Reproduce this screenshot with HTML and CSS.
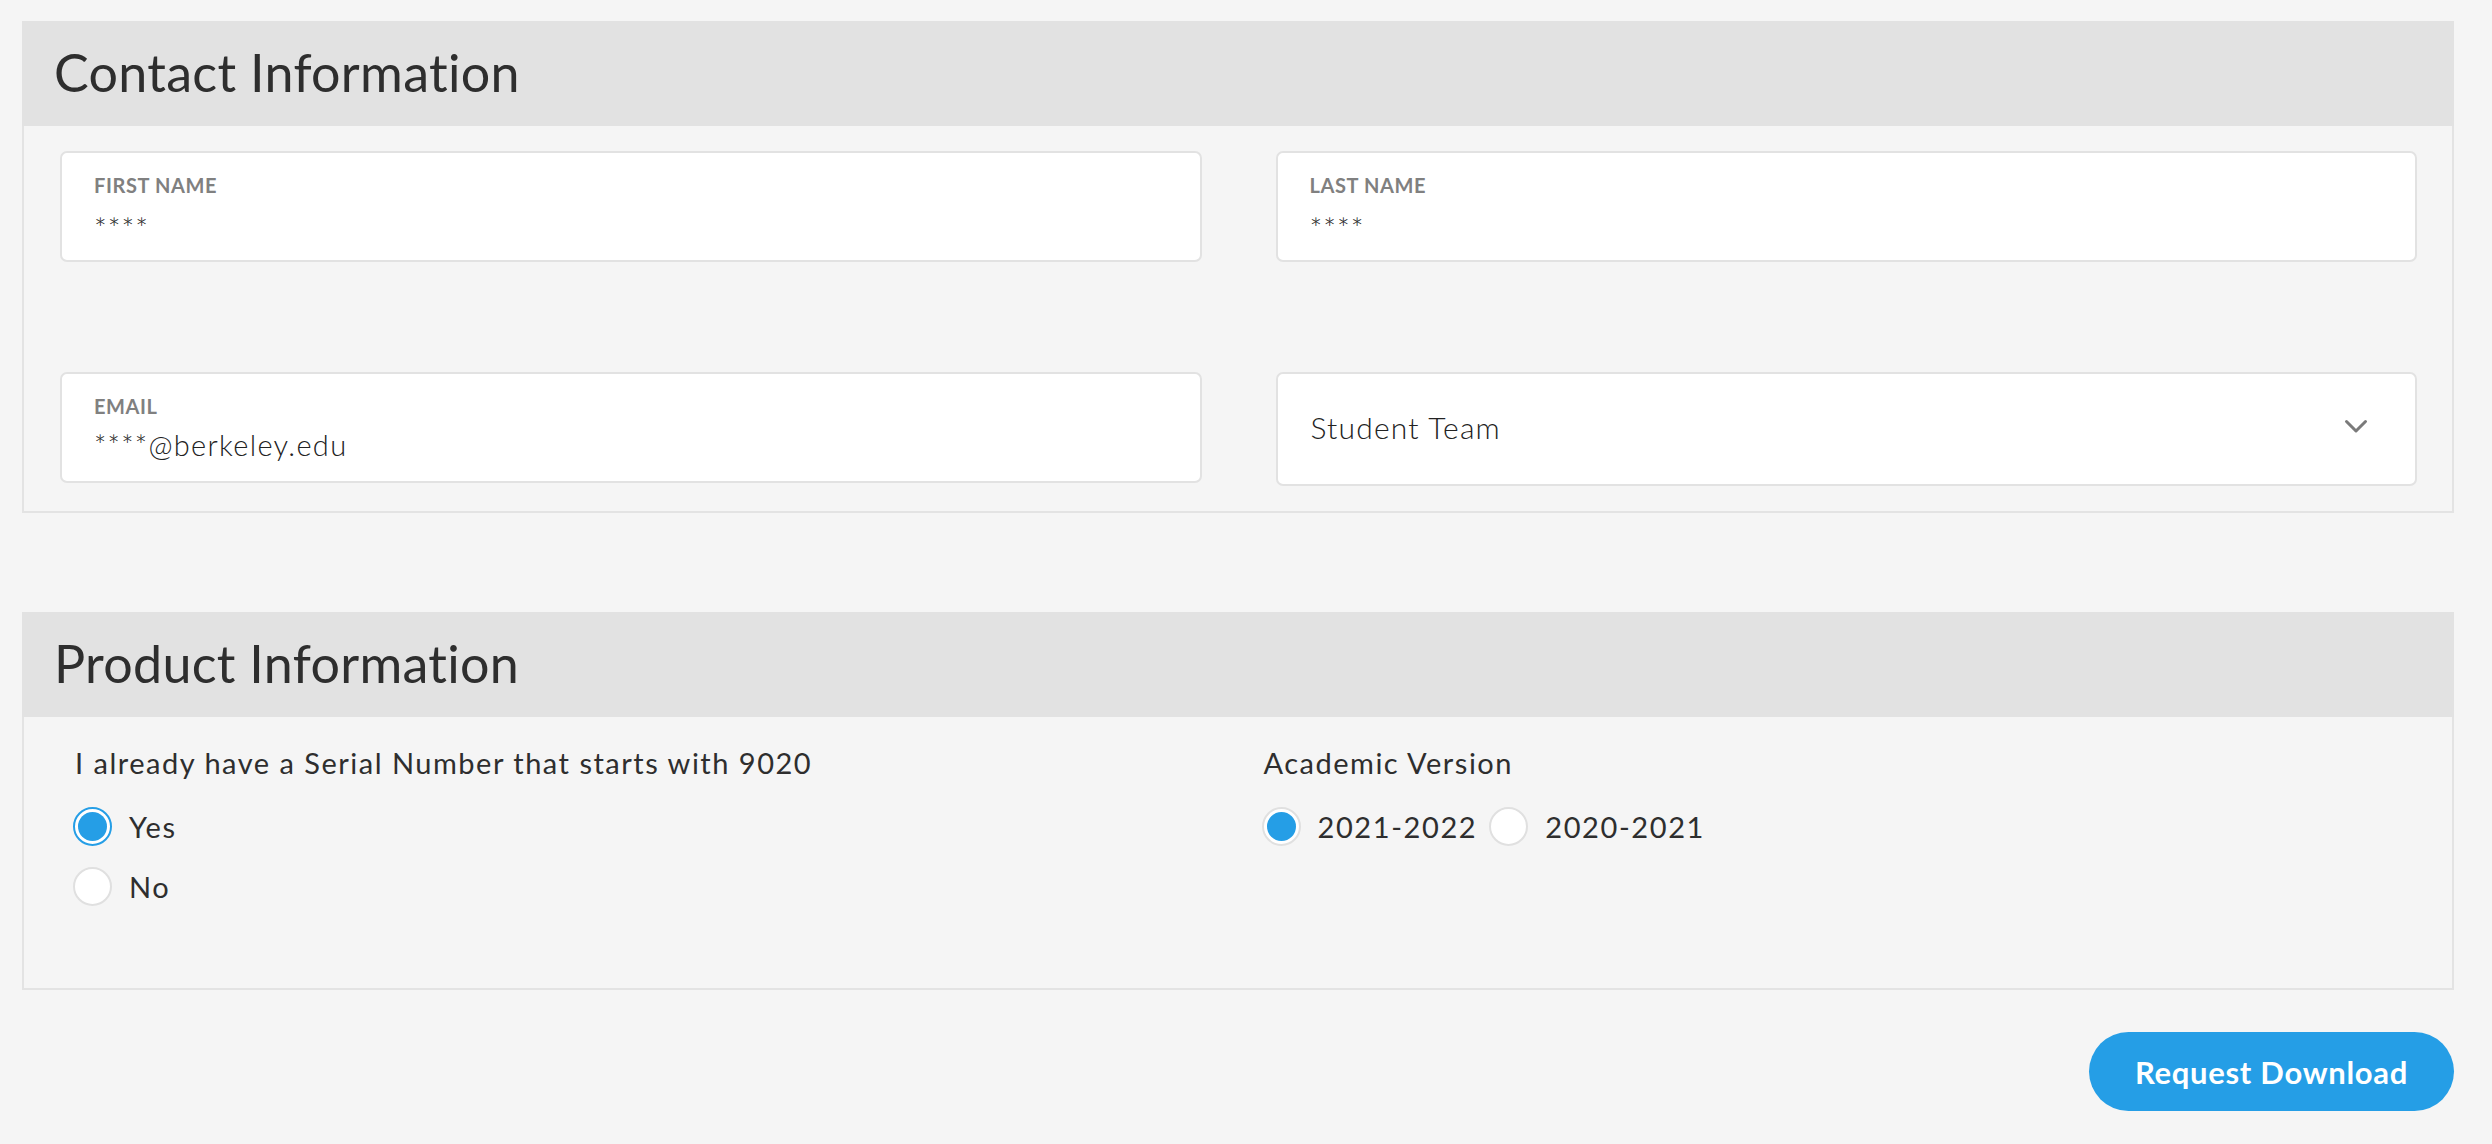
FILE: index.html
```html
<!DOCTYPE html>
<html lang="en">
<head>
<meta charset="utf-8">
<title>Request Download</title>
<link rel="stylesheet" href="styles.css">
</head>
<body>
<main class="page">
  <section class="panel">
    <header class="panel-head"><h2>Contact Information</h2></header>
    <div class="panel-body fields">
      <div class="field">
        <span class="field-label">First Name</span>
        <span class="field-value">****</span>
      </div>
      <div class="field">
        <span class="field-label">Last Name</span>
        <span class="field-value">****</span>
      </div>
      <div class="field">
        <span class="field-label">Email</span>
        <span class="field-value big">****@berkeley.edu</span>
      </div>
      <div class="field select">
        <span class="select-value">Student Team</span>
        <svg class="chevron" width="24" height="15" viewBox="0 0 24 15"><path d="M2.5 2.5 L12 12 L21.5 2.5" fill="none" stroke="#7a7a7a" stroke-width="3" stroke-linecap="round" stroke-linejoin="round"/></svg>
      </div>
    </div>
  </section>

  <section class="panel panel-product">
    <header class="panel-head"><h2>Product Information</h2></header>
    <div class="panel-body product">
      <div class="group">
        <p class="question">I already have a Serial Number that starts with 9020</p>
        <div class="radio-list">
          <label class="radio-row"><span class="radio checked focus"></span><span class="radio-text">Yes</span></label>
          <label class="radio-row"><span class="radio"></span><span class="radio-text">No</span></label>
        </div>
      </div>
      <div class="group">
        <p class="question">Academic Version</p>
        <div class="radio-inline">
          <label class="radio-row"><span class="radio checked"></span><span class="radio-text">2021-2022</span></label>
          <label class="radio-row"><span class="radio"></span><span class="radio-text">2020-2021</span></label>
        </div>
      </div>
    </div>
  </section>

  <div class="actions">
    <button class="btn-primary" type="button">Request Download</button>
  </div>
</main>
</body>
</html>
```

FILE: styles.css
```css
* { box-sizing: border-box; }

html, body {
  margin: 0;
  background: #f5f5f5;
}

body {
  font-family: Lato, "Open Sans", sans-serif;
  color: #2e2e2e;
  font-variant-ligatures: none;
}

.page {
  padding: 21px 38px 0 22px;
}

.panel {
  border: 2px solid #e3e3e3;
  border-top: 0;
  background: #f5f5f5;
}

.panel-product {
  margin-top: 99px;
}

.panel-head {
  background: #e2e2e2;
  height: 105px;
  display: flex;
  align-items: center;
  padding-left: 32px;
  margin: 0 -2px;
}

.panel-head h2 {
  margin: 0;
  font-size: 52px;
  font-weight: 400;
  letter-spacing: 0.3px;
  color: #2e2e2e;
  padding-bottom: 4px;
}

.fields {
  display: grid;
  grid-template-columns: 1fr 1fr;
  column-gap: 74px;
  row-gap: 110px;
  padding: 25px 35px 25px 36px;
}

.field {
  height: 111px;
  background: #fff;
  border: 2px solid #e2e2e2;
  border-radius: 7px;
  padding: 20px 32px 0;
  display: flex;
  flex-direction: column;
}

.field-label {
  font-size: 20px;
  font-weight: 700;
  text-transform: uppercase;
  color: #808080;
  letter-spacing: 0.6px;
  line-height: 24px;
}

.field-value {
  font-size: 30px;
  font-weight: 300;
  line-height: 34px;
  margin-top: 13px;
  color: #222;
  letter-spacing: 1px;
}

.field-value.big {
  font-size: 29px;
  margin-top: 10px;
  letter-spacing: 1.3px;
}

.field.select {
  flex-direction: row;
  align-items: center;
  justify-content: space-between;
  padding: 0 47px 5px 33px;
  height: 114px;
}

.select-value {
  font-size: 30px;
  font-weight: 300;
  color: #222;
  letter-spacing: 1.2px;
}

.chevron {
  display: block;
}

.product {
  display: grid;
  grid-template-columns: 1fr 1fr;
  column-gap: 52px;
  padding: 26px 52px 82px 51px;
}

.question {
  margin: 0;
  font-size: 29px;
  line-height: 40px;
  color: #2e2e2e;
  letter-spacing: 1.5px;
}

.radio-list {
  display: flex;
  flex-direction: column;
  gap: 21px;
  margin-top: 24px;
}

.radio-inline {
  display: flex;
  gap: 10px;
  margin-top: 24px;
}

.radio-row {
  display: flex;
  align-items: center;
  gap: 17px;
}

.radio {
  width: 39px;
  height: 39px;
  border-radius: 50%;
  border: 2px solid #e0e0e0;
  background: #fff;
  position: relative;
  flex: none;
  margin-left: -2px;
}

.radio.checked::after {
  content: "";
  position: absolute;
  inset: 3px;
  border-radius: 50%;
  background: #259ee6;
}

.radio.focus {
  border-color: #259ee6;
}

.radio-text {
  font-size: 29px;
  color: #2e2e2e;
  letter-spacing: 1.6px;
}

.radio-inline .radio-row + .radio-row {
  margin-left: 4px;
}

.actions {
  display: flex;
  justify-content: flex-end;
  padding-top: 42px;
}

.btn-primary {
  width: 365px;
  height: 79px;
  border: 0;
  border-radius: 40px;
  background: #259ee6;
  color: #fff;
  font-family: Lato, "Open Sans", sans-serif;
  font-size: 31px;
  font-weight: 700;
  letter-spacing: 0.7px;
  font-variant-ligatures: none;
}
```
